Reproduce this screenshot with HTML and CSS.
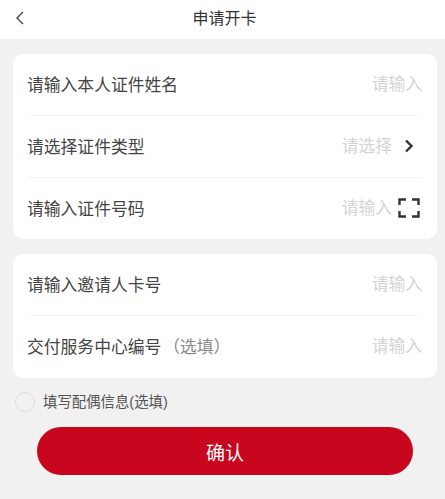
FILE: index.html
```html
<!DOCTYPE html>
<html lang="zh-CN">
<head>
    <meta charset="UTF-8">
    <title>申请开卡</title>
    <link rel="stylesheet" href="styles.css">
</head>
<body>

<div class="header">
    <svg class="back" width="12" height="16" viewBox="0 0 12 16">
        <path d="M10 2 L4 8 L10 14" fill="none" stroke="#444" stroke-width="1.4"/>
    </svg>
    <div class="title">申请开卡</div>
</div>

<div class="card">
    <div class="row">
        <div class="label">请输入本人证件姓名</div>
        <div class="hint">请输入</div>
    </div>
    <div class="row">
        <div class="label">请选择证件类型</div>
        <div class="hint">请选择</div>
        <svg class="arrow" width="12" height="14" viewBox="0 0 12 14">
            <path d="M3 1.5 L8.5 7 L3 12.5" fill="none" stroke="#333" stroke-width="2.4"/>
        </svg>
    </div>
    <div class="row row-short">
        <div class="label">请输入证件号码</div>
        <div class="hint">请输入</div>
        <svg class="scan" width="22" height="20" viewBox="0 0 22 20">
            <path d="M1.5 7 V1.5 H8 M14 1.5 H20.5 V7 M20.5 13 V18.5 H14 M8 18.5 H1.5 V13" fill="none" stroke="#333" stroke-width="2.4"/>
        </svg>
    </div>
</div>

<div class="card">
    <div class="row">
        <div class="label">请输入邀请人卡号</div>
        <div class="hint">请输入</div>
    </div>
    <div class="row">
        <div class="label">交付服务中心编号<span class="optional">（选填）</span></div>
        <div class="hint">请输入</div>
    </div>
</div>

<div class="check-row">
    <div class="circle"></div>
    <div class="check-label">填写配偶信息(选填)</div>
</div>

<button class="confirm">确认</button>

</body>
</html>
```

FILE: styles.css
```css
body {
    margin: 0;
    height: 499px;
    overflow: hidden;
    background-color: #f1f1f1;
    font-family: "Liberation Sans", "Noto Sans CJK SC", sans-serif;
    color: #444;
}

.header {
    height: 39px;
    box-sizing: border-box;
    padding-bottom: 5px;
    background-color: #fff;
    display: flex;
    align-items: center;
    justify-content: center;
    position: relative;
}

.back {
    position: absolute;
    left: 13px;
    top: 10px;
}

.title {
    font-size: 16px;
    margin-left: 4px;
    color: #333;
}

.card {
    margin: 15px 8px 0 13px;
    padding: 0 15px 0 14px;
    background-color: #fff;
    border-radius: 10px;
}

.row {
    height: 62px;
    box-sizing: border-box;
    padding-bottom: 2px;
    display: flex;
    align-items: center;
    border-bottom: 1px solid #f3f3f3;
}

.row:last-child {
    border-bottom: none;
}

.row-short {
    height: 61px;
}

.label {
    flex: 1;
    font-size: 16.8px;
    color: #444;
}

.optional {
    margin-left: 2px;
    color: #888;
}

.hint {
    margin-bottom: 2px;
    font-size: 16.8px;
    color: #d4d4d4;
}

.arrow {
    margin-left: 11px;
    margin-right: 7px;
}

.scan {
    margin-left: 6px;
    margin-right: 2px;
}

.check-row {
    display: flex;
    align-items: center;
    margin: 14px 0 0 15px;
}

.circle {
    width: 18px;
    height: 18px;
    border: 1px solid #dcdcdc;
    border-radius: 50%;
}

.check-label {
    margin-left: 8px;
    font-size: 14.4px;
    line-height: 20px;
    color: #555;
}

.confirm {
    display: block;
    width: 376px;
    height: 48px;
    margin: 15px 0 0 37px;
    padding: 0;
    border: none;
    border-radius: 24px;
    background-color: #c8071e;
    color: #fff;
    font-family: inherit;
    font-size: 19px;
}
```
